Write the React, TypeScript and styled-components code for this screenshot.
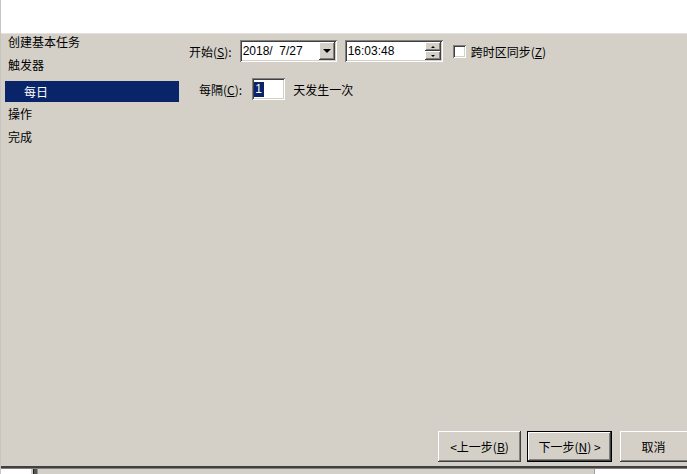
import styled, { createGlobalStyle, css } from "styled-components"

const FACE = "#d4d0c8"
const SELECTED = "#0a246a"

const GlobalStyle = createGlobalStyle`
    html, body {
        margin: 0;
        padding: 0;
        background: #ffffff;
    }
    body {
        font-family: "Noto Sans CJK SC", "Liberation Sans", sans-serif;
        font-size: 12px;
        color: #000;
    }
`

const raised = css`
    background: ${FACE};
    box-shadow:
        inset -1px -1px #404040,
        inset 1px 1px #ffffff,
        inset -2px -2px #808080,
        inset 2px 2px ${FACE};
`

const sunken = css`
    background: #ffffff;
    box-sizing: border-box;
    box-shadow:
        inset 1px 1px #808080,
        inset -1px -1px #ffffff,
        inset 2px 2px #404040,
        inset -2px -2px ${FACE};
`

export default function App() {
    return (
        <>
            <GlobalStyle />
            <Window>
                <Header />
                <Main>
                    <Body>
                        <Sidebar>
                            <NavItem>创建基本任务</NavItem>
                            <NavItem>触发器</NavItem>
                            <NavItem $active>每日</NavItem>
                            <NavItem>操作</NavItem>
                            <NavItem>完成</NavItem>
                        </Sidebar>

                        <Content>
                            <Row>
                                <Label>开始(<u>S</u>):</Label>
                                <Field $width={97}>
                                    <FieldText>2018/&nbsp;&nbsp;7/27</FieldText>
                                    <DropButton><ArrowDown /></DropButton>
                                </Field>
                                <Field $width={98}>
                                    <FieldText>16:03:48</FieldText>
                                    <Spinner>
                                        <SpinHalf><SmallArrow $up /></SpinHalf>
                                        <SpinHalf><SmallArrow /></SpinHalf>
                                    </Spinner>
                                </Field>
                                <Checkbox />
                                <Label>跨时区同步(<u>Z</u>)</Label>
                            </Row>
                            <Row $indent={10}>
                                <Label $extra={2}>每隔(<u>C</u>):</Label>
                                <Field $width={33}>
                                    <Selection>1</Selection>
                                </Field>
                                <Label>天发生一次</Label>
                            </Row>
                        </Content>
                    </Body>

                    <Footer>
                        <PushButton $width={83}>&lt;上一步(<u>B</u>)</PushButton>
                        <PushButton $width={85} $default>下一步(<u>N</u>) &gt;</PushButton>
                        <PushButton $width={67} $cut>取消</PushButton>
                    </Footer>
                </Main>
                <Divider />
                <Strip>
                    <StripWhite $width={30} />
                    <StripGray $width={2} />
                    <StripThumb />
                    <StripGray $grow />
                    <StripWhite $grow />
                </Strip>
            </Window>
        </>
    )
}

const Window = styled.div`
    width: 687px;
    height: 474px;
    overflow: hidden;
    display: flex;
    flex-direction: column;
    border-left: 1px solid #c8c4c0;
    box-sizing: border-box;
`
const Header = styled.div`
    height: 33px;
    background: #ffffff;
    flex: none;
`
const Main = styled.div`
    flex: 1;
    background: ${FACE};
    border-top: 1px solid #e4e1dc;
    display: flex;
    flex-direction: column;
`
const Body = styled.div`
    flex: 1;
    display: flex;
`
const Sidebar = styled.div`
    width: 178px;
    box-sizing: border-box;
    padding-left: 4px;
    margin-top: -4px;
    display: flex;
    flex-direction: column;
`
const NavItem = styled.div<{ $active?: boolean }>`
    height: 23px;
    line-height: 23px;
    padding-left: 3px;
    white-space: nowrap;
    ${p => p.$active && css`
        height: 21px;
        line-height: 21px;
        margin-top: 5px;
        padding-left: 19px;
        background: ${SELECTED};
        color: #ffffff;
    `}
`
const Content = styled.div`
    flex: 1;
    padding: 6px 0 0 10px;
    display: flex;
    flex-direction: column;
    gap: 16px;
`
const Row = styled.div<{ $indent?: number }>`
    display: flex;
    align-items: center;
    height: 22px;
    padding-left: ${p => p.$indent ?? 0}px;
    gap: 8px;
`
const Label = styled.span<{ $extra?: number }>`
    white-space: nowrap;
    margin-right: ${p => p.$extra ?? 0}px;
`
const Field = styled.div<{ $width: number }>`
    ${sunken};
    width: ${p => p.$width}px;
    height: 22px;
    display: flex;
    align-items: center;
    padding: 2px;
`
const FieldText = styled.span`
    flex: 1;
    padding-left: 1px;
    font-family: "Liberation Sans", sans-serif;
    font-size: 12px;
    white-space: pre;
`
const DropButton = styled.div`
    ${raised};
    width: 16px;
    height: 18px;
    display: flex;
    align-items: center;
    justify-content: center;
`
const ArrowDown = styled.div`
    width: 0;
    height: 0;
    border-left: 4px solid transparent;
    border-right: 4px solid transparent;
    border-top: 4px solid #000;
`
const Spinner = styled.div`
    width: 16px;
    height: 18px;
    display: flex;
    flex-direction: column;
`
const SpinHalf = styled.div`
    ${raised};
    flex: 1;
    display: flex;
    align-items: center;
    justify-content: center;
`
const SmallArrow = styled.div<{ $up?: boolean }>`
    width: 0;
    height: 0;
    border-left: 2px solid transparent;
    border-right: 2px solid transparent;
    ${p => p.$up ? css`border-bottom: 2px solid #000;` : css`border-top: 2px solid #000;`}
`
const Checkbox = styled.div`
    ${sunken};
    width: 13px;
    height: 13px;
    margin-left: 2px;
    margin-right: -3px;
`
const Selection = styled.span`
    background: ${SELECTED};
    color: #ffffff;
    font-family: "Liberation Sans", sans-serif;
    font-size: 12px;
    line-height: 15px;
    padding: 0 2px 0 1px;
`
const Footer = styled.div`
    display: flex;
    justify-content: flex-end;
    align-items: flex-end;
    gap: 6px;
    padding-bottom: 4px;
    & > :last-child {
        margin-left: 2px;
    }
`
const PushButton = styled.div<{ $width: number; $default?: boolean; $cut?: boolean }>`
    ${raised};
    width: ${p => p.$width}px;
    height: 31px;
    box-sizing: border-box;
    display: flex;
    align-items: center;
    justify-content: center;
    white-space: nowrap;
    ${p => p.$default && css`
        border: 1px solid #000;
    `}
    ${p => p.$cut && css`
        box-shadow:
            inset 0 -1px #404040,
            inset 1px 1px #ffffff,
            inset 0 -2px #808080;
    `}
`
const Divider = styled.div`
    height: 2px;
    background: #404040;
    border-bottom: 1px solid #808080;
    flex: none;
`
const Strip = styled.div`
    height: 5px;
    flex: none;
    display: flex;
`
const StripWhite = styled.div<{ $width?: number; $grow?: boolean }>`
    background: #ffffff;
    width: ${p => (p.$width ? `${p.$width}px` : "auto")};
    flex: ${p => (p.$grow ? "0 0 92px" : "none")};
`
const StripGray = styled.div<{ $width?: number; $grow?: boolean }>`
    background: ${FACE};
    width: ${p => (p.$width ? `${p.$width}px` : "auto")};
    flex: ${p => (p.$grow ? 1 : "none")};
    border-right: ${p => (p.$grow ? "1px solid #a0a0a0" : "none")};
`
const StripThumb = styled.div`
    width: 5px;
    background: #555555;
    border-left: 1px solid #202020;
    border-right: 1px solid #909090;
    box-sizing: border-box;
`
